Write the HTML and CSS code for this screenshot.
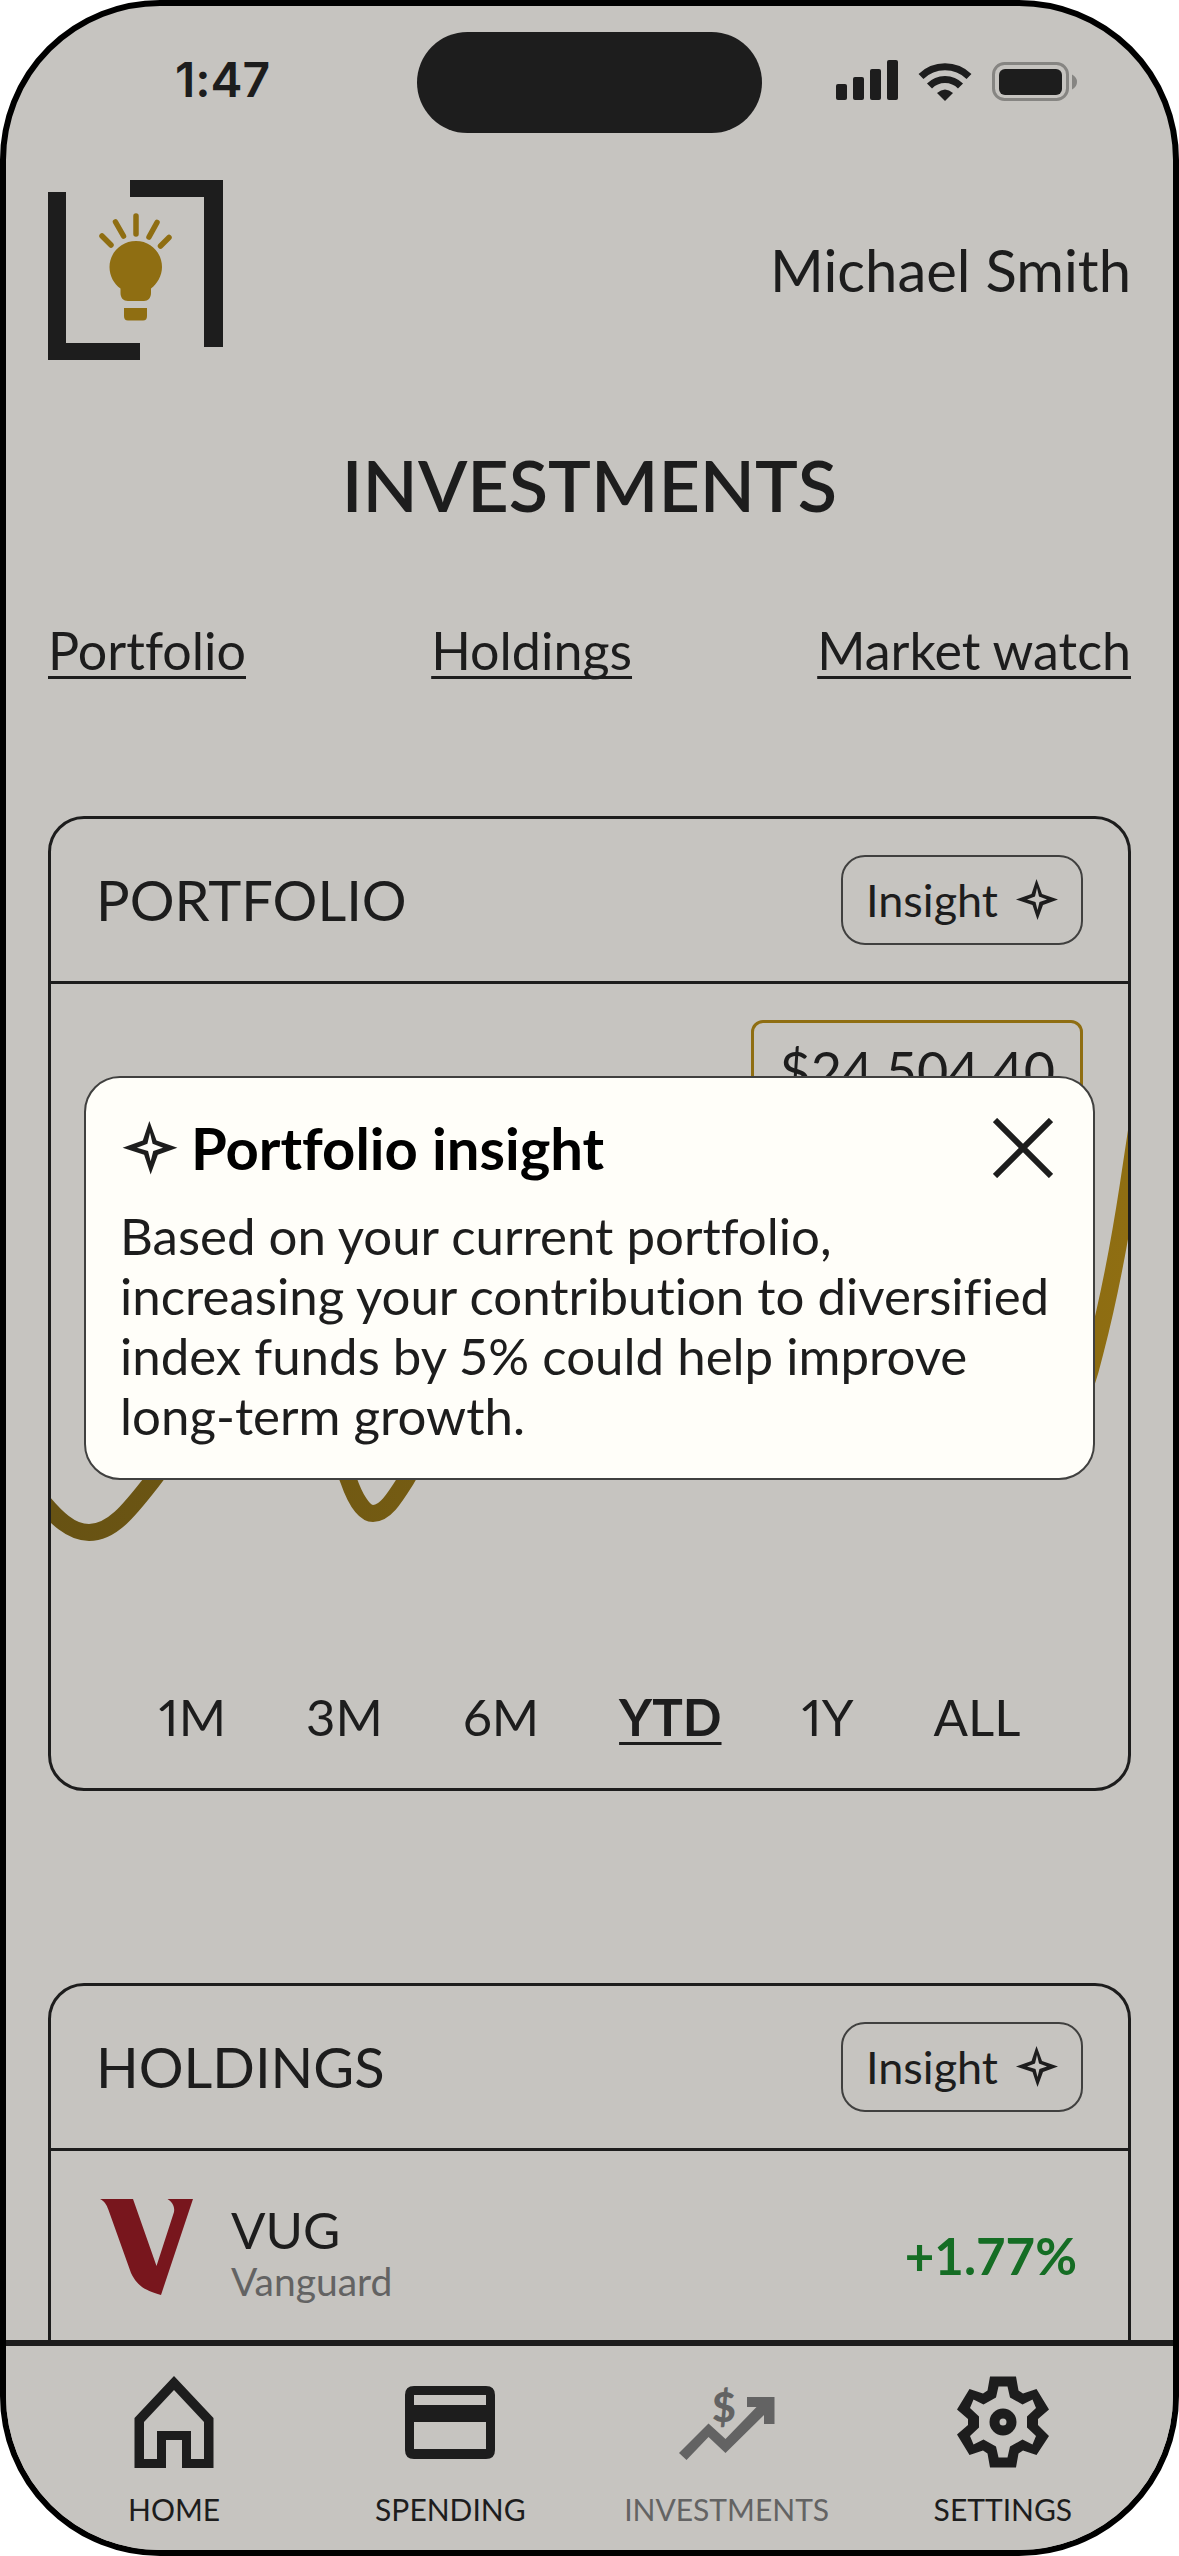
FILE: index.html
```html
<!DOCTYPE html>
<html lang="en">
<head>
<meta charset="utf-8">
<meta name="viewport" content="width=device-width, initial-scale=1">
<title>Investments</title>
<link rel="stylesheet" href="styles.css">
</head>
<body>
<div class="phone">
  <div class="status">
    <span class="status-time">1:47</span>
    <div class="island"></div>
    <svg class="status-icons" viewBox="0 0 242 42" aria-hidden="true">
      <rect x="0" y="25" width="11" height="16" rx="2"/>
      <rect x="17" y="18" width="11" height="23" rx="2"/>
      <rect x="34" y="10" width="11" height="31" rx="2"/>
      <rect x="51" y="1" width="11" height="40" rx="2"/>
      <g fill="none" stroke="#1d1d1d" stroke-width="7">
        <path d="M85 17.500A34.500 34.500 0 0 1 133 17.500"/>
        <path d="M93.500 27A21.500 21.500 0 0 1 124.500 27"/>
      </g>
      <path d="M109 42L101 34Q109 27 117 34Z"/>
      <rect x="157.500" y="4.500" width="74" height="36" rx="11" fill="none" stroke="#868582" stroke-width="3"/>
      <rect x="163" y="10" width="63" height="26" rx="6"/>
      <path d="M236 15.500Q241 18 241 23T236 30.500Z" fill="#868582"/>
    </svg>
  </div>

  <main class="content">
    <header class="top">
      <svg class="logo" viewBox="0 0 175 180" role="img" aria-label="Logo">
        <path d="M0 12H18V163H92V180H0Z M82 0H175V167H156V17H82Z" fill="#1d1d1d"/>
        <g fill="#8f6e12" stroke="none">
          <path d="M88 61C103 61 114 73 114 87C114 96 109 104 103 108.500V113C103 118 100 121 96 121H80C75.500 121 72.500 118 72.500 113V108.500C66 104 61.500 96 61.500 87C61.500 73 73 61 88 61Z"/>
          <path d="M76 128H99V136Q99 140.500 95 140.500H80Q76 140.500 76 136Z"/>
        </g>
        <path d="M54 56L63 65M67.500 42L75.500 56M88 36V54M109 42.500L101 57M121 57.500L112.500 66" fill="none" stroke="#8f6e12" stroke-width="5.500" stroke-linecap="round"/>
      </svg>
      <span class="user">Michael Smith</span>
    </header>

    <h1 class="title">INVESTMENTS</h1>

    <nav class="jump" aria-label="Sections">
      <a href="#portfolio">Portfolio</a>
      <a href="#holdings">Holdings</a>
      <a href="#market">Market watch</a>
    </nav>

    <section class="card" id="portfolio">
      <div class="card-head">
        <h2>PORTFOLIO</h2>
        <button class="insight" type="button">Insight
          <svg class="star" viewBox="0 0 42 42" aria-hidden="true"><path fill-rule="evenodd" d="M20.500 0L26 15L42 20.500L27 26L21.500 41L16.500 26L0 20.500L15.500 15Z M21 9L19 17.500L11 20.500L19.500 23L21.500 31L23.500 23L31 20.500L23 17.500Z"/></svg>
        </button>
      </div>
      <div class="chart">
        <svg class="chart-line" viewBox="0 0 1077 703" aria-hidden="true">
          <defs>
            <linearGradient id="gold" gradientUnits="userSpaceOnUse" x1="0" y1="0" x2="1077" y2="0">
              <stop offset="0" stop-color="#675213"/>
              <stop offset="1" stop-color="#8f6e12"/>
            </linearGradient>
          </defs>
          <path fill="none" stroke="url(#gold)" stroke-width="17" d="M-12 513C5 534 20 548.500 38 548.500C62 548.500 80 524 102 496C150 435 190 330 225 330C260 330 280 450 297.500 496C303 512 312 529.500 322 529.500C334 529.500 343 515 355 496C400 420 440 300 500 300C600 300 650 400 740 400C860 400 940 480 985 470C1015 463 1034 410 1044 368C1056 322 1068 262 1077 203L1088 130"/>
        </svg>
        <output class="value">$24,504.40</output>
      </div>
      <div class="ranges">
        <button type="button">1M</button>
        <button type="button">3M</button>
        <button type="button">6M</button>
        <button type="button" class="is-active" aria-pressed="true">YTD</button>
        <button type="button">1Y</button>
        <button type="button">ALL</button>
      </div>
    </section>

    <section class="card" id="holdings">
      <div class="card-head">
        <h2>HOLDINGS</h2>
        <button class="insight" type="button">Insight
          <svg class="star" viewBox="0 0 42 42" aria-hidden="true"><path fill-rule="evenodd" d="M20.500 0L26 15L42 20.500L27 26L21.500 41L16.500 26L0 20.500L15.500 15Z M21 9L19 17.500L11 20.500L19.500 23L21.500 31L23.500 23L31 20.500L23 17.500Z"/></svg>
        </button>
      </div>
      <div class="holding">
        <svg class="holding-logo" viewBox="0 0 94 96" aria-hidden="true"><path fill="#78161d" d="M0 0H33L56.500 67L74 13C75 7 72 3 67.500 0H93L61 96C45 91 38 88 31 74L8.500 11C6.500 5 4 2 0 0Z"/></svg>
        <div class="holding-name">
          <span class="ticker">VUG</span>
          <span class="issuer">Vanguard</span>
        </div>
        <span class="change">+1.77%</span>
      </div>
    </section>
  </main>

  <nav class="tabs" aria-label="Main">
    <a href="#home">
      <svg viewBox="0 0 96 96" aria-hidden="true"><path fill-rule="evenodd" d="M48 2L87.500 44V94H56V66H40V94H8.500V44Z M48 16L18 48V85H31V57H65V85H78V48Z"/></svg>
      HOME
    </a>
    <a href="#spending">
      <svg viewBox="0 0 96 96" aria-hidden="true"><path fill-rule="evenodd" d="M12 12H84Q93 12 93 21V76Q93 85 84 85H12Q3 85 3 76V21Q3 12 12 12Z M12 21V31H84V21Z M12 48V75H84V48Z"/></svg>
      SPENDING
    </a>
    <a href="#investments" class="is-current" aria-current="page">
      <svg viewBox="0 0 96 96" aria-hidden="true"><path d="M0 79L29.500 49.500L46.500 65L77.500 33H68V23H95.500V50H85V41L46.500 79L29.500 63L7.500 86Z"/><text x="45" y="48" text-anchor="middle" font-size="41" font-weight="900">$</text></svg>
      INVESTMENTS
    </a>
    <a href="#settings">
      <svg viewBox="-48 -48 96 96" aria-hidden="true"><path fill-rule="evenodd" d="M-13 -45.500H13L15.500 -31.500L20 -28.500L33.500 -33L46 -12.500L35 -3V3L46 14L33.500 33L20 28.500L15.500 31.500L13 45.500H-13L-15.500 31.500L-20 28.500L-33.500 33L-46 12.500L-35 3V-3L-46 -12.500L-33.500 -33L-20 -28.500L-15.500 -31.500Z M-4.500 -35.500L-7 -24.500L-19.500 -17.500L-29.500 -22.500L-33 -14L-24 -5.500V5.500L-33 14L-29.500 22.500L-19.500 17.500L-7 24.500L-4.500 35.500H4.500L7 24.500L19.500 17.500L29.500 22.500L33 14L24 5.500V-5.500L33 -14L29.500 -22.500L19.500 -17.500L7 -24.500L4.500 -35.500Z"/><circle r="8.500" fill="none" stroke="currentColor" stroke-width="10"/></svg>
      SETTINGS
    </a>
  </nav>

  <div class="overlay">
    <section class="modal" role="dialog" aria-labelledby="insight-title">
      <div class="modal-head">
        <svg class="modal-star" viewBox="-2 -3 46 48" aria-hidden="true"><path fill-rule="evenodd" d="M20.500 0L26 15L42 20.500L27 26L21.500 41L16.500 26L0 20.500L15.500 15Z M21 9L19 17.500L11 20.500L19.500 23L21.500 31L23.500 23L31 20.500L23 17.500Z"/></svg>
        <h2 id="insight-title">Portfolio insight</h2>
        <button class="close" type="button" aria-label="Close">
          <svg viewBox="0 0 60 60" aria-hidden="true"><path d="M2 2L58 58M58 2L2 58" fill="none" stroke="#1d1d1d" stroke-width="6"/></svg>
        </button>
      </div>
      <p>Based on your current portfolio, increasing your contribution to diversified index funds by 5% could help improve long-term growth.</p>
    </section>
  </div>
</div>
</body>
</html>
```
FILE: styles.css
```css
:root {
  --ink: #1d1d1d;
  --hairline: #40403f;
  --surface: #c6c4c0;
  --gold: #8f6e12;
  --muted: #636363;
  --line: 3px solid var(--ink);
}

* {
  box-sizing: border-box;
}

body {
  margin: 0;
  background: #fff;
  color: var(--ink);
  font-family: Lato, "Open Sans", sans-serif;
  font-size: 51px;
  font-variant-ligatures: none;
  line-height: 60px;
}

h1,
h2,
p {
  margin: 0;
  font-weight: 400;
}

button {
  padding: 0;
  border: 0;
  background: none;
  color: inherit;
  font: inherit;
}

a {
  color: inherit;
}

svg {
  display: block;
  flex: none;
  fill: currentColor;
}

.phone {
  position: relative;
  display: flex;
  flex-direction: column;
  height: 100vh;
  overflow: hidden;
  border: 6px solid #000;
  border-radius: 160px;
  background: var(--surface);
}

/* Status bar */
.status {
  display: grid;
  grid-template-columns: 1fr 345px 1fr;
  align-items: center;
  justify-items: center;
  padding: 26px 22px 0;
}

.status-time,
.status-icons {
  margin-bottom: 5px;
}

.status-time {
  font-family: Inter, sans-serif;
  font-size: 48px;
  font-weight: 600;
}

.island {
  width: 100%;
  height: 101px;
  border-radius: 51px;
  background: var(--ink);
}

.status-icons {
  width: 242px;
}

/* Scrolling area */
.content {
  display: flex;
  flex: 1;
  flex-direction: column;
  min-height: 0;
  overflow: hidden;
  padding: 47px 42px 0;
}

.content > * {
  flex: none;
}

.top {
  display: flex;
  align-items: center;
  justify-content: space-between;
}

.logo {
  width: 175px;
}

.user {
  font-size: 58px;
}

.title {
  margin-top: 79px;
  font-size: 72px;
  font-weight: 600;
  line-height: 90px;
  text-align: center;
}

.jump {
  display: flex;
  justify-content: space-between;
  margin-top: 91px;
  font-size: 52px;
}

.jump a,
.ranges .is-active {
  text-decoration: underline;
  text-decoration-skip-ink: none;
  text-decoration-thickness: 3px;
  text-underline-offset: 6px;
}

/* Cards */
.card {
  margin-top: 136px;
  border: var(--line);
  border-radius: 36px;
  overflow: hidden;
}

.card + .card {
  margin-top: 192px;
  padding-bottom: 60px;
}

.card-head {
  display: flex;
  align-items: center;
  justify-content: space-between;
  padding: 36px 45px;
  border-bottom: var(--line);
}

.card-head h2 {
  font-size: 56px;
}

.insight {
  display: flex;
  align-items: center;
  gap: 18px;
  height: 90px;
  padding: 0 23px;
  border: 2px solid var(--hairline);
  border-radius: 24px;
  font-size: 45px;
}

.star {
  width: 42px;
}

.chart {
  position: relative;
}

.chart-line {
  width: 100%;
}

.value {
  position: absolute;
  top: 36px;
  right: 45px;
  padding: 18px 25px;
  border: 3px solid var(--gold);
  border-radius: 12px;
  font-size: 54px;
}

.ranges {
  display: flex;
  justify-content: center;
  gap: 80px;
  padding-bottom: 41px;
  font-variant-numeric: proportional-nums;
}

.ranges .is-active {
  font-weight: 700;
}

.holding {
  display: flex;
  align-items: center;
  padding: 48px 51px 48px 49px;
}

.holding-logo {
  align-self: flex-start;
  width: 94px;
}

.holding-name {
  display: flex;
  flex: 1;
  flex-direction: column;
  margin-left: 37px;
  padding-bottom: 12px;
}

.ticker {
  line-height: 62px;
}

.issuer {
  color: var(--muted);
  font-size: 39px;
  line-height: 40px;
}

.change {
  color: #156d24;
  font-weight: 700;
}

/* Bottom navigation */
.tabs {
  display: grid;
  flex: none;
  grid-template-columns: repeat(4, 1fr);
  padding: 28px 32px 23px 30px;
  border-top: 6px solid var(--ink);
  background: var(--surface);
  font-size: 30px;
  line-height: 36px;
}

.tabs a {
  display: flex;
  flex-direction: column;
  align-items: center;
  gap: 21px;
  text-decoration: none;
}

.tabs svg {
  width: 96px;
}

.tabs .is-current {
  color: var(--muted);
}

/* Insight dialog, centred over the screen */
.overlay {
  position: absolute;
  inset: 0;
  display: grid;
  align-items: center;
  padding: 0 78px;
}

.modal {
  padding: 35px 32px 32px 34px;
  border: 2px solid var(--hairline);
  border-radius: 36px;
  background: #fffef9;
}

.modal-head {
  display: flex;
  align-items: center;
  gap: 11px;
  height: 70px;
  margin-bottom: 23px;
}

.modal-head h2 {
  flex: 1;
  color: #000;
  font-size: 58px;
  font-weight: 700;
}

.modal-star {
  width: 60px;
}

.close {
  padding: 8px;
}

.close svg {
  width: 60px;
}
```
